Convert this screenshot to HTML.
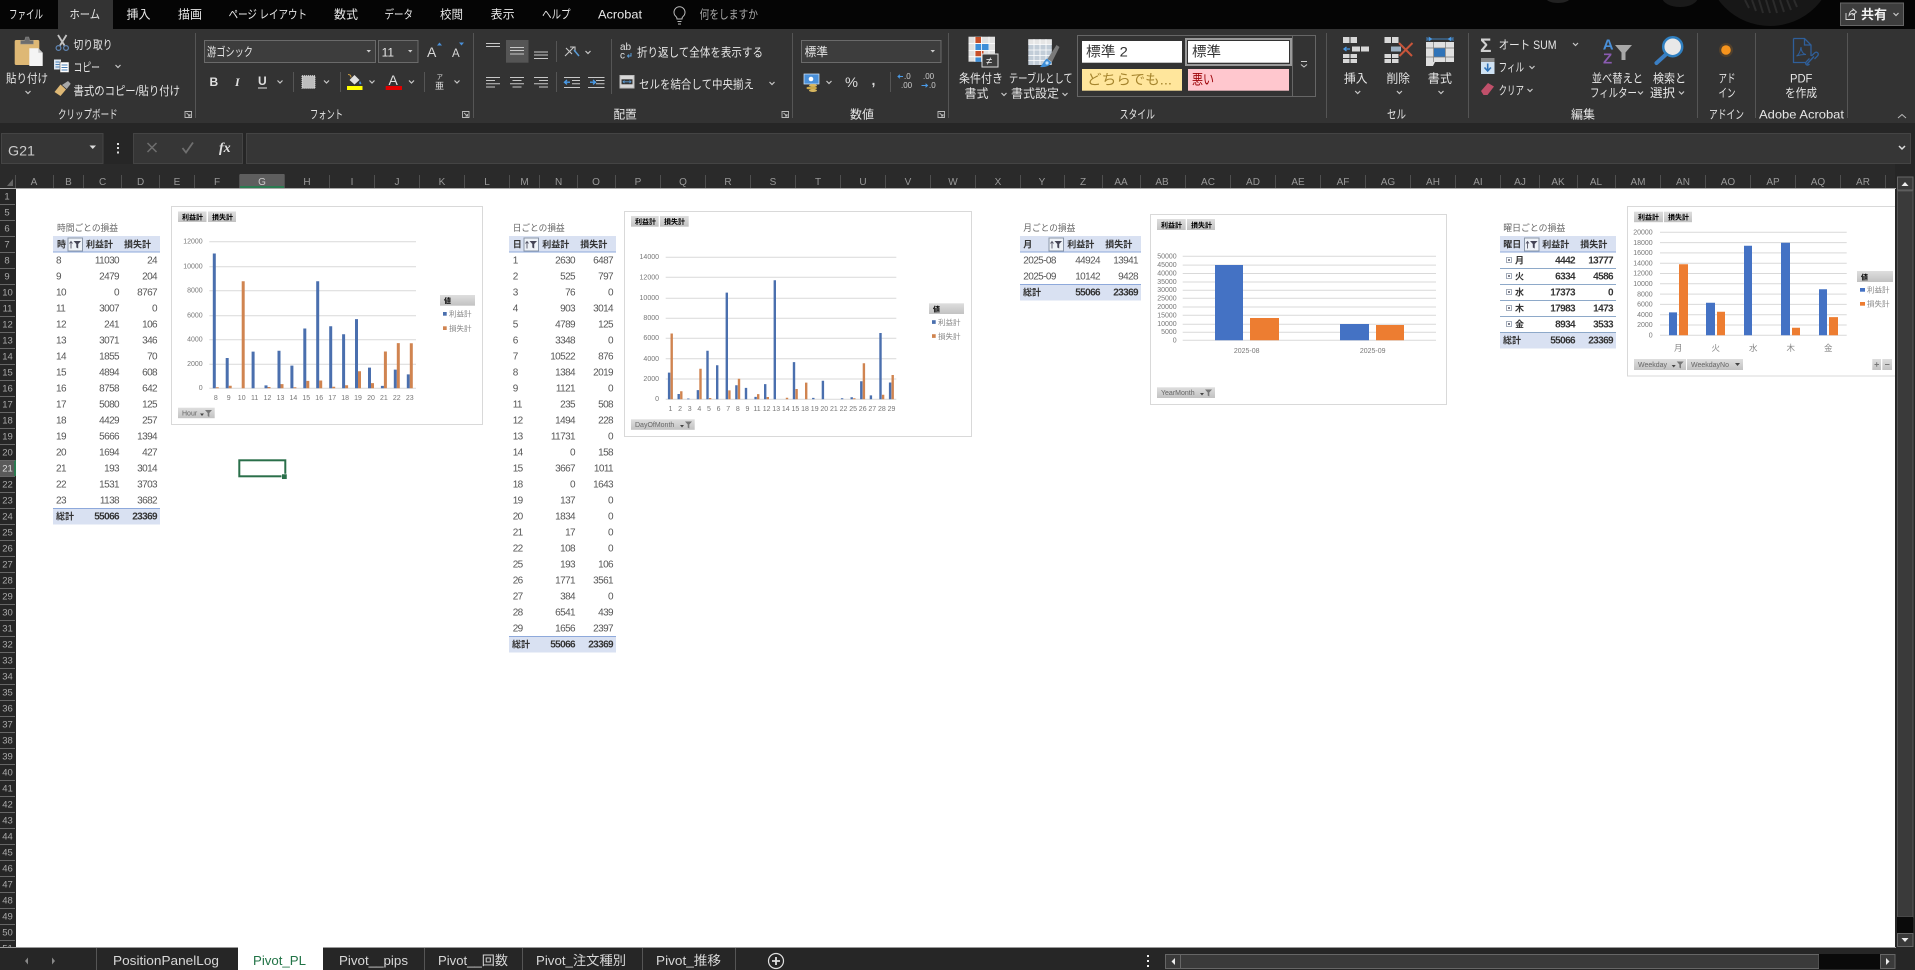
<!DOCTYPE html>
<html lang="ja"><head><meta charset="utf-8"><title>Excel</title>
<style>
html,body{margin:0;padding:0;background:#262626;overflow:hidden;width:1915px;height:970px}
svg{display:block;position:absolute;left:0;top:0}
text{font-family:"Liberation Sans","Noto Sans CJK JP",sans-serif;white-space:pre}
.r text,text.r{fill:#e6e6e6;font-size:12px}
.tb text{fill:#e8e8e8;font-size:12px}
.gl text{fill:#d8d8d8;font-size:12px}
.ch{fill:none;stroke:#cfcfcf;stroke-width:1.2}
.ic{fill:none;stroke:#c8c8c8;stroke-width:1}
.ch2 text{font-size:10px;fill:#999;text-anchor:middle}
.rh text{font-size:9.5px;fill:#aaa;text-anchor:middle}
.num text{font-size:10px;letter-spacing:-.6px;fill:#555}
.e{text-anchor:end}
.hd text{font-size:9px;fill:#333;font-weight:bold}
.ttl{font-size:9px;fill:#666}
.cl text{font-size:7px;fill:#777}
.cl .m{text-anchor:middle}
.b{font-size:7px;font-weight:bold;fill:#000}
.f{font-size:7px;fill:#666}
.lg{font-size:7.5px;fill:#888}
.tabs text{font-size:13px;fill:#d8d8d8}
.sf{font-family:"Liberation Serif","Noto Serif CJK SC",serif}
</style></head><body>
<svg width="1915" height="970" viewBox="0 0 1915 970" xmlns="http://www.w3.org/2000/svg">
<defs>
<linearGradient id="g" x1="0" y1="0" x2="0" y2="1"><stop offset="0" stop-color="#dedede"/><stop offset="1" stop-color="#c2c2c2"/></linearGradient>
<path id="c" d="M-2.5-1L0 1.5 2.5-1" fill="none" stroke="#c8c8c8" stroke-width="1.2"/>
<path id="l" d="M.5.5h6.5v6h-6.5zM2 2l3.5 3M5.5 3v2h-2" fill="none" stroke="#bbb" stroke-width=".9"/>
<g id="fb"><rect x=".5" y=".5" width="14.5" height="13" fill="#eef2f8" stroke="#8a96a8"/><path d="M3.5 11V4.5M2 6l1.5-2L5 6" fill="none" stroke="#556" stroke-width=".9"/><path d="M6 3.5h7.5l-2.8 3v4.5l-1.9-1V6.500z" fill="#445"/></g>
<g id="ff"><path d="M0 4h4l-2 2.500z" fill="#444"/><path d="M5 .5h7l-2.700 3v4l-1.600-1v-3z" fill="#777"/></g>
</defs>

<!-- sheet -->
<rect x="16" y="189" width="1880" height="758" fill="#fff"/>

<!-- Table 1 -->
<text class="ttl" x="57" y="231" textLength="61" lengthAdjust="spacingAndGlyphs">時間ごとの損益</text>
<rect x="53" y="236" width="107" height="16" fill="#d9e1f2"/><rect x="53" y="251.500" width="107" height="1" fill="#8ea9db"/>
<rect x="53" y="508" width="107" height="16.500" fill="#d9e1f2"/><rect x="53" y="508" width="107" height="1" fill="#8ea9db"/>
<use href="#fb" x="67.500" y="237.500"/>
<g class="hd"><text x="57" y="247.500">時</text><text x="86" y="247.500">利益計</text><text x="124" y="247.500">損失計</text><text x="56" y="519.500" font-size="9">総計</text></g>
<g class="num">
<text x="56" y="263.600">8</text><text x="56" y="279.600">9</text><text x="56" y="295.600">10</text><text x="56" y="311.600">11</text><text x="56" y="327.600">12</text><text x="56" y="343.600">13</text><text x="56" y="359.600">14</text><text x="56" y="375.600">15</text><text x="56" y="391.600">16</text><text x="56" y="407.600">17</text><text x="56" y="423.600">18</text><text x="56" y="439.600">19</text><text x="56" y="455.600">20</text><text x="56" y="471.600">21</text><text x="56" y="487.600">22</text><text x="56" y="503.600">23</text>
<g class="e">
<text class="e" x="119" y="263.600">11030</text><text class="e" x="157" y="263.600">24</text>
<text class="e" x="119" y="279.600">2479</text><text class="e" x="157" y="279.600">204</text>
<text class="e" x="119" y="295.600">0</text><text class="e" x="157" y="295.600">8767</text>
<text class="e" x="119" y="311.600">3007</text><text class="e" x="157" y="311.600">0</text>
<text class="e" x="119" y="327.600">241</text><text class="e" x="157" y="327.600">106</text>
<text class="e" x="119" y="343.600">3071</text><text class="e" x="157" y="343.600">346</text>
<text class="e" x="119" y="359.600">1855</text><text class="e" x="157" y="359.600">70</text>
<text class="e" x="119" y="375.600">4894</text><text class="e" x="157" y="375.600">608</text>
<text class="e" x="119" y="391.600">8758</text><text class="e" x="157" y="391.600">642</text>
<text class="e" x="119" y="407.600">5080</text><text class="e" x="157" y="407.600">125</text>
<text class="e" x="119" y="423.600">4429</text><text class="e" x="157" y="423.600">257</text>
<text class="e" x="119" y="439.600">5666</text><text class="e" x="157" y="439.600">1394</text>
<text class="e" x="119" y="455.600">1694</text><text class="e" x="157" y="455.600">427</text>
<text class="e" x="119" y="471.600">193</text><text class="e" x="157" y="471.600">3014</text>
<text class="e" x="119" y="487.600">1531</text><text class="e" x="157" y="487.600">3703</text>
<text class="e" x="119" y="503.600">1138</text><text class="e" x="157" y="503.600">3682</text>
<text class="e" x="119" y="519.600" font-weight="bold" style="fill:#333">55066</text><text class="e" x="157" y="519.600" font-weight="bold" style="fill:#333">23369</text>
</g></g>

<!-- Chart 1 -->
<rect x="171.500" y="206.500" width="311" height="218" fill="#fff" stroke="#d9d9d9"/>
<rect x="178" y="211.500" width="28.500" height="10.500" fill="url(#g)"/><rect x="208" y="211.500" width="28" height="10.500" fill="url(#g)"/>
<text class="b" x="182" y="219.500">利益計</text><text class="b" x="212" y="219.500">損失計</text>
<path d="M209.300 241.700H416M209.300 266.700H416M209.300 290.700H416M209.300 315.700H416M209.300 339.700H416M209.300 364.300H416M209.300 388.300H416" stroke="#d9d9d9" fill="none"/>
<g class="cl"><g class="e"><text class="e" x="202.700" y="243.500">12000</text><text class="e" x="202.700" y="268.500">10000</text><text class="e" x="202.700" y="292.500">8000</text><text class="e" x="202.700" y="317.500">6000</text><text class="e" x="202.700" y="341.500">4000</text><text class="e" x="202.700" y="366">2000</text><text class="e" x="202.700" y="390">0</text></g>
<text class="m" x="215.800" y="400">8</text><text class="m" x="228.700" y="400">9</text><text class="m" x="241.700" y="400">10</text><text class="m" x="254.600" y="400">11</text><text class="m" x="267.500" y="400">12</text><text class="m" x="280.500" y="400">13</text><text class="m" x="293.400" y="400">14</text><text class="m" x="306.300" y="400">15</text><text class="m" x="319.200" y="400">16</text><text class="m" x="332.200" y="400">17</text><text class="m" x="345.100" y="400">18</text><text class="m" x="358" y="400">19</text><text class="m" x="371" y="400">20</text><text class="m" x="383.900" y="400">21</text><text class="m" x="396.800" y="400">22</text><text class="m" x="409.800" y="400">23</text></g>
<path fill="#4a6fae" d="M212.800 253.500h3v134.800h-3zM225.700 358h3v30.300h-3zM251.600 351.600h3v36.700h-3zM264.500 385.400h3v2.900h-3zM277.500 350.800h3v37.500h-3zM290.400 365.600h3v22.700h-3zM303.300 328.500h3v59.800h-3zM316.200 281.300h3v107h-3zM329.200 326.200h3v62.100h-3zM342.100 334.200h3v54.100h-3zM355 319.100h3v69.200h-3zM368 367.600h3v20.700h-3zM380.900 385.900h3v2.400h-3zM393.800 369.600h3v18.700h-3zM406.800 374.400h3v13.900h-3z"/>
<path fill="#d08450" d="M215.800 387.300h3v1h-3zM228.700 385.800h3v2.500h-3zM241.700 281.200h3v107.100h-3zM267.500 387h3v1.300h-3zM280.500 384.100h3v4.200h-3zM293.400 387.300h3v1h-3zM306.300 380.900h3v7.400h-3zM319.200 380.500h3v7.800h-3zM332.200 386.800h3v1.500h-3zM345.100 385.200h3v3.100h-3zM358 371.300h3v17h-3zM371 383.100h3v5.200h-3zM383.900 351.500h3v36.800h-3zM396.800 343.100h3v45.200h-3zM409.800 343.300h3v45h-3z"/>
<rect x="178" y="407.700" width="36.700" height="10.500" fill="url(#g)"/><text class="f" x="182" y="415.500">Hour</text><use href="#ff" x="200" y="409.500"/>
<rect x="440" y="295" width="35" height="10.700" fill="url(#g)"/><text class="b" x="444" y="303" font-size="8">値</text>
<rect x="443" y="312" width="3.700" height="3.700" fill="#4a6fae"/><text class="lg" x="449" y="316.500">利益計</text>
<rect x="443" y="326.300" width="3.700" height="3.700" fill="#d08450"/><text class="lg" x="449" y="331">損失計</text>

<rect x="239.300" y="460.300" width="46" height="16" fill="none" stroke="#2a6f4a" stroke-width="2"/>
<rect x="281.700" y="474" width="5.300" height="5.300" fill="#2a6f4a" stroke="#fff" stroke-width=".5"/>

<!-- Table 2 -->
<text class="ttl" x="512.700" y="231" textLength="52" lengthAdjust="spacingAndGlyphs">日ごとの損益</text>
<rect x="509" y="236" width="107" height="16" fill="#d9e1f2"/><rect x="509" y="251.500" width="107" height="1" fill="#8ea9db"/>
<rect x="509" y="636" width="107" height="16.500" fill="#d9e1f2"/><rect x="509" y="636" width="107" height="1" fill="#8ea9db"/>
<use href="#fb" x="523.500" y="237.500"/>
<g class="hd"><text x="512.700" y="247.500">日</text><text x="542.300" y="247.500">利益計</text><text x="580.300" y="247.500">損失計</text><text x="512" y="647.500">総計</text></g>
<g class="num">
<text x="512.700" y="263.600">1</text><text class="e" x="575" y="263.600">2630</text><text class="e" x="613" y="263.600">6487</text>
<text x="512.700" y="279.600">2</text><text class="e" x="575" y="279.600">525</text><text class="e" x="613" y="279.600">797</text>
<text x="512.700" y="295.600">3</text><text class="e" x="575" y="295.600">76</text><text class="e" x="613" y="295.600">0</text>
<text x="512.700" y="311.600">4</text><text class="e" x="575" y="311.600">903</text><text class="e" x="613" y="311.600">3014</text>
<text x="512.700" y="327.600">5</text><text class="e" x="575" y="327.600">4789</text><text class="e" x="613" y="327.600">125</text>
<text x="512.700" y="343.600">6</text><text class="e" x="575" y="343.600">3348</text><text class="e" x="613" y="343.600">0</text>
<text x="512.700" y="359.600">7</text><text class="e" x="575" y="359.600">10522</text><text class="e" x="613" y="359.600">876</text>
<text x="512.700" y="375.600">8</text><text class="e" x="575" y="375.600">1384</text><text class="e" x="613" y="375.600">2019</text>
<text x="512.700" y="391.600">9</text><text class="e" x="575" y="391.600">1121</text><text class="e" x="613" y="391.600">0</text>
<text x="512.700" y="407.600">11</text><text class="e" x="575" y="407.600">235</text><text class="e" x="613" y="407.600">508</text>
<text x="512.700" y="423.600">12</text><text class="e" x="575" y="423.600">1494</text><text class="e" x="613" y="423.600">228</text>
<text x="512.700" y="439.600">13</text><text class="e" x="575" y="439.600">11731</text><text class="e" x="613" y="439.600">0</text>
<text x="512.700" y="455.600">14</text><text class="e" x="575" y="455.600">0</text><text class="e" x="613" y="455.600">158</text>
<text x="512.700" y="471.600">15</text><text class="e" x="575" y="471.600">3667</text><text class="e" x="613" y="471.600">1011</text>
<text x="512.700" y="487.600">18</text><text class="e" x="575" y="487.600">0</text><text class="e" x="613" y="487.600">1643</text>
<text x="512.700" y="503.600">19</text><text class="e" x="575" y="503.600">137</text><text class="e" x="613" y="503.600">0</text>
<text x="512.700" y="519.600">20</text><text class="e" x="575" y="519.600">1834</text><text class="e" x="613" y="519.600">0</text>
<text x="512.700" y="535.600">21</text><text class="e" x="575" y="535.600">17</text><text class="e" x="613" y="535.600">0</text>
<text x="512.700" y="551.600">22</text><text class="e" x="575" y="551.600">108</text><text class="e" x="613" y="551.600">0</text>
<text x="512.700" y="567.600">25</text><text class="e" x="575" y="567.600">193</text><text class="e" x="613" y="567.600">106</text>
<text x="512.700" y="583.600">26</text><text class="e" x="575" y="583.600">1771</text><text class="e" x="613" y="583.600">3561</text>
<text x="512.700" y="599.600">27</text><text class="e" x="575" y="599.600">384</text><text class="e" x="613" y="599.600">0</text>
<text x="512.700" y="615.600">28</text><text class="e" x="575" y="615.600">6541</text><text class="e" x="613" y="615.600">439</text>
<text x="512.700" y="631.600">29</text><text class="e" x="575" y="631.600">1656</text><text class="e" x="613" y="631.600">2397</text>
<text class="e" x="575" y="647.600" font-weight="bold" style="fill:#333">55066</text><text class="e" x="613" y="647.600" font-weight="bold" style="fill:#333">23369</text>
</g>

<!-- Chart 2 -->
<rect x="624.500" y="211.500" width="347" height="225" fill="#fff" stroke="#d9d9d9"/>
<rect x="631" y="216" width="27.700" height="10.700" fill="url(#g)"/><rect x="660" y="216" width="28.700" height="10.700" fill="url(#g)"/>
<text class="b" x="635" y="224">利益計</text><text class="b" x="664" y="224">損失計</text>
<path d="M665.700 257.300H896.300M665.700 277.300H896.300M665.700 298.300H896.300M665.700 318.300H896.300M665.700 338.300H896.300M665.700 358.700H896.300M665.700 379H896.300M665.700 399.300H896.300" stroke="#d9d9d9" fill="none"/>
<g class="cl"><text class="e" x="659" y="259">14000</text><text class="e" x="659" y="279.500">12000</text><text class="e" x="659" y="300">10000</text><text class="e" x="659" y="320">8000</text><text class="e" x="659" y="340">6000</text><text class="e" x="659" y="361">4000</text><text class="e" x="659" y="381">2000</text><text class="e" x="659" y="401">0</text>
<text class="m" x="670.500" y="411">1</text><text class="m" x="680.100" y="411">2</text><text class="m" x="689.700" y="411">3</text><text class="m" x="699.300" y="411">4</text><text class="m" x="708.900" y="411">5</text><text class="m" x="718.600" y="411">6</text><text class="m" x="728.200" y="411">7</text><text class="m" x="737.800" y="411">8</text><text class="m" x="747.400" y="411">9</text><text class="m" x="757" y="411">11</text><text class="m" x="766.600" y="411">12</text><text class="m" x="776.200" y="411">13</text><text class="m" x="785.800" y="411">14</text><text class="m" x="795.400" y="411">15</text><text class="m" x="805" y="411">18</text><text class="m" x="814.700" y="411">19</text><text class="m" x="824.300" y="411">20</text><text class="m" x="833.900" y="411">21</text><text class="m" x="843.500" y="411">22</text><text class="m" x="853.100" y="411">25</text><text class="m" x="862.700" y="411">26</text><text class="m" x="872.300" y="411">27</text><text class="m" x="881.900" y="411">28</text><text class="m" x="891.500" y="411">29</text></g>
<path fill="#4a6fae" d="M667.900 372.600h2.400v26.700h-2.400zM677.500 394h2.400v5.300h-2.400zM687.100 398.500h2.400v.8h-2.400zM696.700 390.100h2.400v9.200h-2.400zM706.300 350.700h2.400v48.600h-2.400zM716 365.300h2.400v34h-2.400zM725.600 292.600h2.400v106.700h-2.400zM735.200 385.300h2.400v14h-2.400zM744.800 387.900h2.400v11.400h-2.400zM754.400 396.900h2.400v2.400h-2.400zM764 384.100h2.400v15.200h-2.400zM773.600 280.300h2.400v119h-2.400zM792.800 362.100h2.400v37.200h-2.400zM812.100 397.900h2.400v1.400h-2.400zM821.700 380.700h2.400v18.600h-2.400zM840.900 398.200h2.400v1.100h-2.400zM850.500 397.300h2.400v2h-2.400zM860.100 381.300h2.400v18h-2.400zM869.700 395.400h2.400v3.900h-2.400zM879.300 333h2.400v66.300h-2.400zM888.900 382.500h2.400v16.800h-2.400z"/>
<path fill="#d08450" d="M670.500 333.500h2.400v65.800h-2.400zM680.100 391.200h2.400v8.100h-2.400zM699.300 368.700h2.400v30.600h-2.400zM708.900 398h2.400v1.300h-2.400zM728.200 390.400h2.400v8.900h-2.400zM737.800 378.800h2.400v20.500h-2.400zM757 394.100h2.400v5.200h-2.400zM766.600 397h2.400v2.300h-2.400zM785.800 397.700h2.400v1.600h-2.400zM795.400 389h2.400v10.300h-2.400zM805 382.600h2.400v16.700h-2.400zM853.100 398.200h2.400v1.100h-2.400zM862.700 363.200h2.400v36.100h-2.400zM881.900 394.800h2.400v4.500h-2.400zM891.500 375h2.400v24.300h-2.400z"/>
<rect x="631" y="419.300" width="63.700" height="10.500" fill="url(#g)"/><text class="f" x="635" y="427">DayOfMonth</text><use href="#ff" x="680" y="421"/>
<rect x="929" y="303.300" width="35" height="10.700" fill="url(#g)"/><text class="b" x="933" y="311.500" font-size="8">値</text>
<rect x="932" y="320.200" width="3.700" height="3.700" fill="#4a6fae"/><text class="lg" x="938" y="324.800">利益計</text>
<rect x="932" y="334.200" width="3.700" height="3.700" fill="#d08450"/><text class="lg" x="938" y="338.800">損失計</text>

<!-- Table 3 -->
<text class="ttl" x="1023.300" y="231" textLength="52" lengthAdjust="spacingAndGlyphs">月ごとの損益</text>
<rect x="1020" y="236" width="121" height="16" fill="#d9e1f2"/><rect x="1020" y="251.500" width="121" height="1" fill="#8ea9db"/>
<rect x="1020" y="284" width="121" height="16.500" fill="#d9e1f2"/><rect x="1020" y="284" width="121" height="1" fill="#8ea9db"/>
<use href="#fb" x="1048.500" y="237.500"/>
<g class="hd"><text x="1023.300" y="247.500">月</text><text x="1067.300" y="247.500">利益計</text><text x="1105.300" y="247.500">損失計</text><text x="1023" y="295.500">総計</text></g>
<g class="num"><text x="1023.300" y="263.600">2025-08</text><text class="e" x="1100" y="263.600">44924</text><text class="e" x="1138" y="263.600">13941</text>
<text x="1023.300" y="279.600">2025-09</text><text class="e" x="1100" y="279.600">10142</text><text class="e" x="1138" y="279.600">9428</text>
<text class="e" x="1100" y="295.600" font-weight="bold" style="fill:#333">55066</text><text class="e" x="1138" y="295.600" font-weight="bold" style="fill:#333">23369</text></g>

<!-- Chart 3 -->
<rect x="1150.500" y="214.500" width="296" height="190" fill="#fff" stroke="#d9d9d9"/>
<rect x="1157" y="219" width="28.700" height="11" fill="url(#g)"/><rect x="1187" y="219" width="28" height="11" fill="url(#g)"/>
<text class="b" x="1161" y="227.500">利益計</text><text class="b" x="1191" y="227.500">損失計</text>
<path d="M1182.700 256.300H1436M1182.700 265.100H1436M1182.700 273.500H1436M1182.700 282H1436M1182.700 290.300H1436M1182.700 298.300H1436M1182.700 307H1436M1182.700 315.300H1436M1182.700 324.300H1436M1182.700 332.300H1436M1182.700 340.300H1436" stroke="#d9d9d9" fill="none"/>
<g class="cl"><text class="e" x="1176.700" y="258.500">50000</text><text class="e" x="1176.700" y="267">45000</text><text class="e" x="1176.700" y="275.500">40000</text><text class="e" x="1176.700" y="284">35000</text><text class="e" x="1176.700" y="292">30000</text><text class="e" x="1176.700" y="300.500">25000</text><text class="e" x="1176.700" y="309">20000</text><text class="e" x="1176.700" y="317.500">15000</text><text class="e" x="1176.700" y="326">10000</text><text class="e" x="1176.700" y="334">5000</text><text class="e" x="1176.700" y="342.500">0</text><text class="m" x="1246.700" y="352.800">2025-08</text><text class="m" x="1372.700" y="352.800">2025-09</text></g>
<path fill="#4472c4" d="M1215 265h28v75.300h-28zM1340 324h29v16.300h-29z"/><path fill="#ed7d31" d="M1250 318h29v22.300h-29zM1376 325h28v15.300h-28z"/>
<rect x="1157" y="387.300" width="58" height="10.700" fill="url(#g)"/><text class="f" x="1161" y="395">YearMonth</text><use href="#ff" x="1200" y="389"/>

<!-- Table 4 -->
<text class="ttl" x="1503.300" y="231" textLength="62" lengthAdjust="spacingAndGlyphs">曜日ごとの損益</text>
<rect x="1500" y="236" width="116" height="16" fill="#d9e1f2"/><rect x="1500" y="251.500" width="116" height="1" fill="#8ea9db"/>
<rect x="1500" y="332" width="116" height="16.500" fill="#d9e1f2"/>
<path d="M1500 268.500H1616M1500 284.500H1616M1500 300.500H1616M1500 316.500H1616M1500 332.500H1616" stroke="#8ea9c9"/>
<use href="#fb" x="1524" y="237.500"/>
<g class="hd"><text x="1503.300" y="247.500">曜日</text><text x="1542.300" y="247.500">利益計</text><text x="1580.300" y="247.500">損失計</text><text x="1503" y="343.500">総計</text>
<text x="1515" y="263.500">月</text><text x="1515" y="279.500">火</text><text x="1515" y="295.500">水</text><text x="1515" y="311.500">木</text><text x="1515" y="327.500">金</text></g>
<path d="M1506.500 257.500h5v5h-5zM1506.500 273.500h5v5h-5zM1506.500 289.500h5v5h-5zM1506.500 305.500h5v5h-5zM1506.500 321.500h5v5h-5z" fill="#fff" stroke="#8a96a8" stroke-width=".8"/>
<path d="M1508 260h2M1509 259v2M1508 276h2M1509 275v2M1508 292h2M1509 291v2M1508 308h2M1509 307v2M1508 324h2M1509 323v2" stroke="#334" stroke-width=".8"/>
<g class="num"><g style="font-weight:bold">
<text class="e" x="1575" y="263.600" style="fill:#333">4442</text><text class="e" x="1613" y="263.600" style="fill:#333">13777</text>
<text class="e" x="1575" y="279.600" style="fill:#333">6334</text><text class="e" x="1613" y="279.600" style="fill:#333">4586</text>
<text class="e" x="1575" y="295.600" style="fill:#333">17373</text><text class="e" x="1613" y="295.600" style="fill:#333">0</text>
<text class="e" x="1575" y="311.600" style="fill:#333">17983</text><text class="e" x="1613" y="311.600" style="fill:#333">1473</text>
<text class="e" x="1575" y="327.600" style="fill:#333">8934</text><text class="e" x="1613" y="327.600" style="fill:#333">3533</text>
<text class="e" x="1575" y="343.600" style="fill:#333">55066</text><text class="e" x="1613" y="343.600" style="fill:#333">23369</text></g></g>

<!-- Chart 4 -->
<rect x="1627.500" y="206.500" width="300" height="169.500" fill="#fff" stroke="#d9d9d9"/>
<rect x="1634" y="211.700" width="29" height="10.500" fill="url(#g)"/><rect x="1664" y="211.700" width="28" height="10.500" fill="url(#g)"/>
<text class="b" x="1638" y="219.700">利益計</text><text class="b" x="1668" y="219.700">損失計</text>
<path d="M1660 232.300H1846.700M1660 242.600H1846.700M1660 252.900H1846.700M1660 263.200H1846.700M1660 273.500H1846.700M1660 283.800H1846.700M1660 294.100H1846.700M1660 304.400H1846.700M1660 314.700H1846.700M1660 325H1846.700M1660 335.300H1846.700" stroke="#d9d9d9" fill="none"/>
<g class="cl"><text class="e" x="1652.700" y="234.500">20000</text><text class="e" x="1652.700" y="244.800">18000</text><text class="e" x="1652.700" y="255.100">16000</text><text class="e" x="1652.700" y="265.400">14000</text><text class="e" x="1652.700" y="275.700">12000</text><text class="e" x="1652.700" y="286">10000</text><text class="e" x="1652.700" y="296.300">8000</text><text class="e" x="1652.700" y="306.600">6000</text><text class="e" x="1652.700" y="316.900">4000</text><text class="e" x="1652.700" y="327.200">2000</text><text class="e" x="1652.700" y="337.500">0</text>
<text class="m" x="1678.300" y="351" style="font-size:8.500px;fill:#888">月</text><text class="m" x="1715.700" y="351" style="font-size:8.500px;fill:#888">火</text><text class="m" x="1753.300" y="351" style="font-size:8.500px;fill:#888">水</text><text class="m" x="1790.700" y="351" style="font-size:8.500px;fill:#888">木</text><text class="m" x="1828.300" y="351" style="font-size:8.500px;fill:#888">金</text></g>
<path fill="#4472c4" d="M1669 312.400h8v22.900h-8zM1706 302.700h9v32.600h-9zM1744 245.800h8v89.500h-8zM1781 242.700h9v92.600h-9zM1819 289.300h8v46h-8z"/>
<path fill="#ed7d31" d="M1679 264.300h9v71h-9zM1717 311.700h8v23.600h-8zM1792 327.700h8v7.600h-8zM1829 317.100h9v18.200h-9z"/>
<rect x="1634" y="359" width="52" height="11" fill="url(#g)"/><text class="f" x="1638" y="367">Weekday</text><use href="#ff" x="1671.700" y="361"/>
<rect x="1687" y="359" width="56" height="11" fill="url(#g)"/><text class="f" x="1691" y="367">WeekdayNo</text><path d="M1735 363h5l-2.500 3z" fill="#444"/>
<rect x="1872.300" y="359" width="8.700" height="11" fill="url(#g)"/><rect x="1882.300" y="359" width="9.700" height="11" fill="url(#g)"/>
<path d="M1874.500 364.500h4.500M1876.700 362.200v4.500M1885 364.500h4.500" stroke="#777"/>
<rect x="1857" y="271" width="36" height="11" fill="url(#g)"/><text class="b" x="1861" y="279.500" font-size="8">値</text>
<rect x="1860" y="288" width="5" height="3.700" fill="#4472c4"/><text class="lg" x="1867" y="292.500">利益計</text>
<rect x="1860" y="302" width="5" height="3.700" fill="#ed7d31"/><text class="lg" x="1867" y="306.500">損失計</text>

<!-- Row headers -->
<rect x="0" y="188" width="16" height="760" fill="#262626"/>
<rect x="0" y="460" width="15.500" height="16" fill="#5a5a5a"/><rect x="14" y="460" width="2" height="16" fill="#2a7a50"/>
<path stroke="#666" d="M0 204.500H15M0 220.500H15M0 236.500H15M0 252.500H15M0 268.500H15M0 284.500H15M0 300.500H15M0 316.500H15M0 332.500H15M0 348.500H15M0 364.500H15M0 380.500H15M0 396.500H15M0 412.500H15M0 428.500H15M0 444.500H15M0 460.500H15M0 476.500H15M0 492.500H15M0 508.500H15M0 524.500H15M0 540.500H15M0 556.500H15M0 572.500H15M0 588.500H15M0 604.500H15M0 620.500H15M0 636.500H15M0 652.500H15M0 668.500H15M0 684.500H15M0 700.500H15M0 716.500H15M0 732.500H15M0 748.500H15M0 764.500H15M0 780.500H15M0 796.500H15M0 812.500H15M0 828.500H15M0 844.500H15M0 860.500H15M0 876.500H15M0 892.500H15M0 908.500H15M0 924.500H15M0 940.500H15"/>
<g class="rh"><text x="7" y="199.500">1</text><text x="7" y="215.500">5</text><text x="7" y="231.500">6</text><text x="7" y="247.500">7</text><text x="7" y="263.500">8</text><text x="7" y="279.500">9</text><text x="7.500" y="295.500">10</text><text x="7.500" y="311.500">11</text><text x="7.500" y="327.500">12</text><text x="7.500" y="343.500">13</text><text x="7.500" y="359.500">14</text><text x="7.500" y="375.500">15</text><text x="7.500" y="391.500">16</text><text x="7.500" y="407.500">17</text><text x="7.500" y="423.500">18</text><text x="7.500" y="439.500">19</text><text x="7.500" y="455.500">20</text><text x="7.500" y="471.500" style="fill:#ddd">21</text><text x="7.500" y="487.500">22</text><text x="7.500" y="503.500">23</text><text x="7.500" y="519.500">24</text><text x="7.500" y="535.500">25</text><text x="7.500" y="551.500">26</text><text x="7.500" y="567.500">27</text><text x="7.500" y="583.500">28</text><text x="7.500" y="599.500">29</text><text x="7.500" y="615.500">30</text><text x="7.500" y="631.500">31</text><text x="7.500" y="647.500">32</text><text x="7.500" y="663.500">33</text><text x="7.500" y="679.500">34</text><text x="7.500" y="695.500">35</text><text x="7.500" y="711.500">36</text><text x="7.500" y="727.500">37</text><text x="7.500" y="743.500">38</text><text x="7.500" y="759.500">39</text><text x="7.500" y="775.500">40</text><text x="7.500" y="791.500">41</text><text x="7.500" y="807.500">42</text><text x="7.500" y="823.500">43</text><text x="7.500" y="839.500">44</text><text x="7.500" y="855.500">45</text><text x="7.500" y="871.500">46</text><text x="7.500" y="887.500">47</text><text x="7.500" y="903.500">48</text><text x="7.500" y="919.500">49</text><text x="7.500" y="935.500">50</text><text x="7.500" y="951.500">51</text></g>

<!-- Right scrollbar -->
<rect x="1895" y="164" width="20" height="784" fill="#262626"/>
<rect x="1897.500" y="177" width="15.500" height="13" fill="#3a3a3a" stroke="#666"/><path d="M1901.500 186h7l-3.500-4z" fill="#eee"/>
<rect x="1897.500" y="191" width="15.500" height="726" fill="#3a3a3a" stroke="#555"/>
<rect x="1897" y="917" width="16" height="16" fill="#0a0a0a"/>
<rect x="1897.500" y="933.500" width="15.500" height="13" fill="#3a3a3a" stroke="#666"/><path d="M1901.500 938h7l-3.500 4z" fill="#eee"/>

<!-- Title bar -->
<rect x="0" y="0" width="1915" height="29" fill="#050505"/>
<ellipse cx="1558" cy="-2" rx="12" ry="5" fill="#222"/>
<ellipse cx="1680" cy="-3" rx="18" ry="10" fill="#1a1a1a"/>
<circle cx="1770" cy="-38" r="64" fill="#171717"/>
<path d="M1745 0l4 8M1752 0l4 11M1759 0l4 13M1766 0l4 13M1773 0l4 13M1780 0l4 12M1787 0l4 10M1794 0l3 7" stroke="#2b2b2b" stroke-width="2"/>
<rect x="58" y="0" width="55" height="29" fill="#333"/>
<g class="tb">
<text x="9" y="18.300" textLength="34" lengthAdjust="spacingAndGlyphs">ファイル</text>
<text x="69.500" y="18.300" textLength="30.500" lengthAdjust="spacingAndGlyphs">ホーム</text>
<text x="126.500" y="18.300" textLength="24" lengthAdjust="spacingAndGlyphs">挿入</text>
<text x="178" y="18.300" textLength="24" lengthAdjust="spacingAndGlyphs">描画</text>
<text x="228.600" y="18.300" textLength="78.400" lengthAdjust="spacingAndGlyphs">ページ レイアウト</text>
<text x="334" y="18.300" textLength="24" lengthAdjust="spacingAndGlyphs">数式</text>
<text x="384.500" y="18.300" textLength="28.500" lengthAdjust="spacingAndGlyphs">データ</text>
<text x="440" y="18.300" textLength="23" lengthAdjust="spacingAndGlyphs">校閲</text>
<text x="490.600" y="18.300" textLength="24" lengthAdjust="spacingAndGlyphs">表示</text>
<text x="542" y="18.300" textLength="28.600" lengthAdjust="spacingAndGlyphs">ヘルプ</text>
<text x="598" y="18.300" textLength="44" lengthAdjust="spacingAndGlyphs">Acrobat</text>
<text x="699.600" y="18.300" textLength="58.400" lengthAdjust="spacingAndGlyphs" style="fill:#aaa">何をしますか</text>
</g>
<path d="M676 16.500a5.500 5.500 0 1 1 7 0c-.8.7-1 1.500-1 2.500h-5c0-1-.2-1.800-1-2.500zM677.500 21.500h4M678 24h3" fill="none" stroke="#bbb" stroke-width="1"/>
<rect x="1840.500" y="3" width="63" height="22.500" fill="#3d3d3d" stroke="#666"/>
<path d="M1846 13v6.500h8.500V14M1849 15.500c.3-3 2-5 4-5v-1.500l3.500 3-3.500 3v-1.500c-1.500 0-3 .7-4 2z" fill="none" stroke="#ddd" stroke-width=".9"/>
<text x="1861" y="19" font-size="13" font-weight="bold" fill="#f0f0f0" textLength="26" lengthAdjust="spacingAndGlyphs">共有</text>
<use href="#c" x="1896" y="14"/>

<!-- Ribbon -->
<rect x="0" y="29" width="1915" height="94" fill="#333"/>
<rect x="0" y="123" width="1915" height="41" fill="#262626"/>
<path stroke="#555" d="M195.500 33V118M473.500 33V118M792.500 33V118M948.500 33V118M1326.500 33V118M1468.500 33V118M1697.500 33V118M1755.500 33V118M1847.500 33V118M611.500 39V94M293.500 72V92M340.500 72V92M424.500 72V92M556.500 41V62M556.500 72V92M890.500 72V92"/>

<!-- Clipboard group -->
<rect x="14.700" y="40" width="24.600" height="25" rx="1.500" fill="#deb875"/>
<path d="M20.700 40.500h4l1-3.500h3l1 3.500h3.600v3.500H20.700z" fill="#6d6d6d" stroke="#888" stroke-width=".6"/>
<path d="M29.300 48.300h9l4.400 4.400V66H29.300z" fill="#f4f4f4"/><path d="M38.300 48.300v4.400h4.400" fill="#c8c8c8"/>
<path d="M58 35l6.500 10.500M66.500 35L60 45.500" stroke="#c4c4c4" stroke-width="1.800" fill="none"/>
<circle cx="58.500" cy="48" r="2.400" fill="none" stroke="#5f86b5" stroke-width="1.200"/><circle cx="66" cy="48" r="2.400" fill="none" stroke="#5f86b5" stroke-width="1.200"/>
<rect x="54" y="59.500" width="7" height="10" fill="#dfe8f2"/><rect x="60" y="62" width="9" height="10.500" fill="#fff" stroke="#333" stroke-width=".5"/>
<path d="M55.500 62h4M55.500 64.500h4M55.500 67h4M61.500 65h6M61.500 67.500h6M61.500 70h6" stroke="#4a7fb5" stroke-width="1"/>
<path d="M54.500 92l6-7.500 5.500 5-5.500 6.500z" fill="#deb875"/><path d="M62 85l6-4 2.700 2.700-4 5.300z" fill="#a8a8a8"/>
<g class="r">
<text x="6" y="82.300" textLength="42" lengthAdjust="spacingAndGlyphs">貼り付け</text>
<text x="73.500" y="49" textLength="39" lengthAdjust="spacingAndGlyphs">切り取り</text>
<text x="73.500" y="71.300" textLength="26.500" lengthAdjust="spacingAndGlyphs">コピー</text>
<text x="73.500" y="95" textLength="106.500" lengthAdjust="spacingAndGlyphs">書式のコピー/貼り付け</text>
<text x="58" y="118.300" textLength="59.600" lengthAdjust="spacingAndGlyphs">クリップボード</text>
<text x="310" y="118.300" textLength="33" lengthAdjust="spacingAndGlyphs">フォント</text>
<text x="613.500" y="118.300" textLength="23.200" lengthAdjust="spacingAndGlyphs">配置</text>
<text x="637" y="56.500" textLength="126" lengthAdjust="spacingAndGlyphs">折り返して全体を表示する</text>
<text x="639" y="88.300" textLength="115" lengthAdjust="spacingAndGlyphs">セルを結合して中央揃え</text>
<text x="850" y="118.300" textLength="24" lengthAdjust="spacingAndGlyphs">数値</text>
<text x="959" y="82.300" textLength="44" lengthAdjust="spacingAndGlyphs">条件付き</text>
<text x="964.500" y="97.500" textLength="24" lengthAdjust="spacingAndGlyphs">書式</text>
<text x="1009" y="82.300" textLength="63.600" lengthAdjust="spacingAndGlyphs">テーブルとして</text>
<text x="1011" y="97.500" textLength="48" lengthAdjust="spacingAndGlyphs">書式設定</text>
<text x="1119.600" y="118.300" textLength="35.400" lengthAdjust="spacingAndGlyphs">スタイル</text>
<text x="1344" y="82.300" textLength="23.500" lengthAdjust="spacingAndGlyphs">挿入</text>
<text x="1386.500" y="82.300" textLength="23.500" lengthAdjust="spacingAndGlyphs">削除</text>
<text x="1427.800" y="82.300" textLength="24.200" lengthAdjust="spacingAndGlyphs">書式</text>
<text x="1387" y="118.300" textLength="19" lengthAdjust="spacingAndGlyphs">セル</text>
<text x="1498.600" y="49" textLength="58" lengthAdjust="spacingAndGlyphs">オート SUM</text>
<text x="1498.600" y="71.500" textLength="25.400" lengthAdjust="spacingAndGlyphs">フィル</text>
<text x="1498.600" y="94.300" textLength="25.400" lengthAdjust="spacingAndGlyphs">クリア</text>
<text x="1591.700" y="82.300" textLength="51.300" lengthAdjust="spacingAndGlyphs">並べ替えと</text>
<text x="1590" y="97" textLength="47" lengthAdjust="spacingAndGlyphs">フィルター</text>
<text x="1653" y="82.300" textLength="33" lengthAdjust="spacingAndGlyphs">検索と</text>
<text x="1650" y="97" textLength="25" lengthAdjust="spacingAndGlyphs">選択</text>
<text x="1571" y="118.300" textLength="24" lengthAdjust="spacingAndGlyphs">編集</text>
<text x="1718.500" y="82.300" textLength="17" lengthAdjust="spacingAndGlyphs">アド</text>
<text x="1718.500" y="97" textLength="17" lengthAdjust="spacingAndGlyphs">イン</text>
<text x="1709" y="118.300" textLength="35" lengthAdjust="spacingAndGlyphs">アドイン</text>
<text x="1790" y="82.300" textLength="22.400" lengthAdjust="spacingAndGlyphs">PDF</text>
<text x="1785" y="97" textLength="32" lengthAdjust="spacingAndGlyphs">を作成</text>
<text x="1759" y="118.300" textLength="85" lengthAdjust="spacingAndGlyphs">Adobe Acrobat</text>
</g>
<use href="#c" x="28" y="92"/><use href="#c" x="118" y="66"/><use href="#l" x="184.500" y="111"/>
<use href="#l" x="462" y="111"/><use href="#l" x="781.500" y="111"/><use href="#l" x="937.500" y="111"/>

<rect x="204.500" y="40.500" width="171" height="22" fill="#3d3d3d" stroke="#6a6a6a"/>
<rect x="378.500" y="40.500" width="39.500" height="22" fill="#3d3d3d" stroke="#6a6a6a"/>
<g class="r">
<text x="207" y="56" textLength="46" lengthAdjust="spacingAndGlyphs">游ゴシック</text>
<text x="381.600" y="56.300" textLength="12.400" lengthAdjust="spacingAndGlyphs">11</text>
</g>
<path d="M366.500 50h4.500l-2.250 2.500zM408 50h4.500l-2.250 2.500z" fill="#ccc"/>
<text x="427" y="57" font-size="14" fill="#d8d8d8">A</text><path d="M437 45.500l2.500-3 2.500 3z" fill="#4a90d9"/>
<text x="452" y="57" font-size="11.500" fill="#d8d8d8">A</text><path d="M459 42.500h5l-2.500 3z" fill="#4a90d9"/>
<text x="209.500" y="86" font-size="12" font-weight="bold" fill="#e0e0e0">B</text>
<text class="sf" x="235" y="86" font-size="12" font-style="italic" font-weight="bold" fill="#e0e0e0">I</text>
<text x="258" y="85" font-size="12" font-weight="bold" fill="#e0e0e0">U</text><path d="M258 88h9" stroke="#e0e0e0"/>
<use href="#c" x="280" y="81.500"/>
<rect x="302" y="75.700" width="13" height="12.600" fill="#bdbdbd" stroke="#e8e8e8" stroke-dasharray="1 1"/><use href="#c" x="326.500" y="81.500"/>
<path d="M349.500 80l5-5 5 5-5 4.500z" fill="#e0e0e0"/><path d="M348 74.500c2 0 3 1 3 3" fill="none" stroke="#d0a040"/><path d="M360 81l1.500 2.500-1.500 1-1-1.500z" fill="#4a90d9"/>
<rect x="347" y="86" width="15.500" height="4" fill="#ffff00"/><use href="#c" x="372" y="81.500"/>
<text x="388.500" y="85" font-size="14" fill="#e0e0e0">A</text><rect x="385.700" y="86" width="16.300" height="4" fill="#e00000"/><use href="#c" x="411.500" y="81.500"/>
<text x="436.500" y="79" font-size="6.500" fill="#e0e0e0">ア</text><text x="435" y="89" font-size="9" fill="#e0e0e0">亜</text><use href="#c" x="457" y="81.500"/>

<!-- alignment -->
<rect x="506" y="40" width="22.500" height="22.700" fill="#555"/>
<path class="ic" d="M486 43.500h14M486 46.500h14M510 47.500h14M510 50.500h14M510 54h14M534 52h14M534 55h14M534 58.500h14"/>
<path class="ic" d="M486 77.500h14M486 80.500h9M486 83.800h14M486 87h9M510 77.500h14M512.500 80.500h9M510 83.800h14M512.500 87h9M534 77.500h14M539 80.500h9M534 83.800h14M539 87h9"/>
<path d="M565 56l9-9M570 47h5v5M566 48l6 6" fill="none" stroke="#c8c8c8" stroke-width="1.100"/><path d="M574 50l5 6" stroke="#5a9bd5" stroke-width="1.500"/><use href="#c" x="588" y="52"/>
<path class="ic" d="M564 77.500h16M572 80.500h8M572 83.800h8M564 87.500h16M588 77.500h16.500M596 80.500h8.500M596 83.800h8.500M588 87.500h16.500"/>
<path d="M570 82.200h-5M567 80l-2.500 2.200 2.500 2.200M590 82.200h5M593 80l2.500 2.200-2.500 2.200" fill="none" stroke="#4a9be8" stroke-width="1.400"/>
<text x="620" y="50" font-size="10" fill="#e0e0e0">ab</text><text x="620" y="58.500" font-size="10" fill="#e0e0e0">c</text><path d="M631 53v3h-3.500M629 54.500l-1.500 1.500 1.500 1.500" fill="none" stroke="#5a9bd5"/>
<rect x="620" y="75.500" width="14" height="12.500" fill="#d8d8d8" stroke="#bbb"/><rect x="621.500" y="79.300" width="11" height="5" fill="#333"/><path d="M623 81.800h8M624.500 80.500l-1.500 1.300 1.500 1.300M629.500 80.500l1.500 1.300-1.500 1.300" fill="none" stroke="#5a9bd5" stroke-width=".8"/>
<use href="#c" x="772" y="83"/>

<!-- Number -->
<rect x="801.500" y="40.500" width="139.500" height="22" fill="#3d3d3d" stroke="#6a6a6a"/><path d="M930.500 50h4.500l-2.250 2.500z" fill="#ccc"/>
<text x="804.500" y="56" font-size="12" fill="#e6e6e6" textLength="23.500" lengthAdjust="spacingAndGlyphs">標準</text>
<rect x="804" y="74" width="15" height="10" fill="#4a90d9" stroke="#dcecfb" stroke-width=".7"/><circle cx="811" cy="79" r="2.300" fill="#fff"/>
<ellipse cx="813" cy="85.500" rx="4" ry="1.500" fill="#d8b75f"/><ellipse cx="813" cy="88" rx="4" ry="1.500" fill="#c9a648"/><ellipse cx="813" cy="90.500" rx="4" ry="1.500" fill="#d8b75f"/><ellipse cx="809" cy="88" rx="2.500" ry="1.300" fill="#c9a648"/>
<use href="#c" x="829" y="82"/>
<text x="845" y="87" font-size="14" fill="#dcdcdc" textLength="13" lengthAdjust="spacingAndGlyphs">%</text>
<text x="871.500" y="85" font-size="14" font-weight="bold" fill="#dcdcdc">,</text>
<text x="904" y="79" font-size="8" fill="#ccc">.0</text><text x="901" y="88" font-size="8" fill="#ccc">.00</text><path d="M903 76.500h-5M900 74.700l-2 1.800 2 1.800" fill="none" stroke="#4a9be8" stroke-width="1"/>
<text x="923" y="79" font-size="8" fill="#ccc">.00</text><text x="929" y="88" font-size="8" fill="#ccc">.0</text><path d="M921.500 85.500h6M925.500 83.700l2 1.800-2 1.800" fill="none" stroke="#4a9be8" stroke-width="1"/>

<!-- Cond format -->
<rect x="968.500" y="36.700" width="26.500" height="25" fill="#e0e0e0"/>
<rect x="975" y="37" width="6" height="6" fill="#c8502a"/><rect x="975" y="44" width="14.500" height="6" fill="#3d8ed8"/><rect x="975" y="51" width="8.500" height="5.500" fill="#c8502a"/><rect x="975" y="57.500" width="6.500" height="4.300" fill="#3d8ed8"/>
<path d="M975 36.700v25M981.500 36.700v25M989 36.700v25M968.500 43.500h26.500M968.500 50.500h26.500M968.500 56.700h26.500" stroke="#fff" stroke-width=".8" fill="none"/>
<rect x="982" y="54" width="16" height="13" fill="#3d3d3d" stroke="#ddd"/>
<text x="986" y="64.500" font-size="11" fill="#f0f0f0">≠</text>
<use href="#c" x="1004" y="94"/>
<!-- Table format -->
<rect x="1028.300" y="39.300" width="23.500" height="25.700" fill="#c2cdd8"/><rect x="1028.300" y="39.300" width="23.500" height="5" fill="#e6e6e6"/>
<path d="M1034 39.300v25.700M1040 39.300v25.700M1046 39.300v25.700M1028.300 44.500h23.500M1028.300 50h23.500M1028.300 55.500h23.500M1028.300 60.500h23.500" stroke="#fff" stroke-width=".8"/>
<path d="M1056.500 45l-9 14 4.500 3 7.500-15z" fill="#7a7a7a"/><path d="M1047 58.500c-3 2-3.500 5-7 8.500 5 .5 9-.5 11.500-4.500z" fill="#3d8ed8"/><circle cx="1047" cy="63" r="1.600" fill="#bfe0fb"/>
<use href="#c" x="1065" y="94"/>
<!-- Style gallery -->
<rect x="1077.500" y="35.500" width="238" height="61" fill="none" stroke="#666"/><path d="M1292.500 35.500v61" stroke="#666"/>
<rect x="1082" y="41" width="100" height="21.700" fill="#fff"/>
<rect x="1186" y="39" width="105" height="26" fill="none" stroke="#9a9a9a" stroke-width="2"/>
<rect x="1188" y="41" width="101" height="21.700" fill="#fff"/>
<rect x="1082" y="69" width="100" height="21.700" fill="#ffe69c"/><rect x="1188" y="69" width="101" height="21.700" fill="#ffc7ce"/>
<text x="1086" y="56.500" font-size="14" fill="#333" textLength="41.800" lengthAdjust="spacingAndGlyphs">標準 2</text>
<text x="1192" y="56.500" font-size="14" fill="#333" textLength="29" lengthAdjust="spacingAndGlyphs">標準</text>
<text x="1087" y="84.500" font-size="14" fill="#a6852e" textLength="85" lengthAdjust="spacingAndGlyphs">どちらでも...</text>
<text x="1192" y="84.500" font-size="14" fill="#9c0006" textLength="22" lengthAdjust="spacingAndGlyphs">悪い</text>
<path d="M1301 61.500h6M1301 64.500l3 2.500 3-2.500" fill="none" stroke="#ccc" stroke-width="1"/>

<!-- Cells -->
<path d="M1343 37h6.500v6h-6.500zM1350.500 37h6.500v6h-6.500zM1343 54h6.500v4h-6.500zM1350.500 54h6.500v4h-6.500zM1343 59h6.500v4h-6.500zM1350.500 59h6.500v4h-6.500zM1352 46.500h8v5h-8zM1361 46.500h8v5h-8z" fill="#d8d8d8"/>
<path d="M1350 49h-6M1346.500 47l-2.500 2 2.500 2" fill="none" stroke="#4a9be8" stroke-width="1.300"/>
<use href="#c" x="1357.700" y="92"/>
<path d="M1384.500 37h6.500v6h-6.500zM1392 37h6.500v6h-6.500zM1384.500 54h6.500v4h-6.500zM1392 54h6.500v4h-6.500zM1384.500 59h6.500v4h-6.500zM1392 59h6.500v4h-6.500z" fill="#d8d8d8"/><path d="M1391 46.500h10v5h-10z" fill="#9cb0c2"/>
<path d="M1399 43l13 13M1412.500 43l-13 13" stroke="#c8553a" stroke-width="2"/>
<use href="#c" x="1399.400" y="92"/>
<path d="M1427 39h26M1427 37v4M1453 37v4M1432 39l-3-1.800v3.600zM1448 39l3-1.800v3.600z" fill="#4a9be8" stroke="#4a9be8" stroke-width=".7"/>
<path d="M1426 42h28v20h-19l-2 4h-7z" fill="#e0e0e0"/><rect x="1434" y="48" width="11" height="9" fill="#2f73b8"/>
<path d="M1433.500 42v20M1445.500 42v20M1426 48h28M1426 57h28" stroke="#777" stroke-width=".7" fill="none"/>
<use href="#c" x="1441" y="92"/>

<!-- Editing -->
<text x="1480" y="52" font-size="19" fill="#d0d0d0" font-weight="bold">Σ</text><use href="#c" x="1575.500" y="44"/>
<rect x="1481" y="58" width="13.500" height="4" fill="#8a8a8a"/><rect x="1481" y="62" width="13.500" height="12" fill="#cfe2f3"/><path d="M1487.700 63.500v7M1484.500 67.500l3.200 3.500 3.200-3.500" fill="none" stroke="#2f73b8" stroke-width="1.600"/>
<use href="#c" x="1532" y="67"/>
<path d="M1481 91l7-8 6 3.500-6.500 8.500h-4z" fill="#c0506a"/><use href="#c" x="1530" y="90"/>
<text x="1602.700" y="49.500" font-size="15" font-weight="bold" fill="#4a90d9">A</text><text x="1603" y="63.500" font-size="15" font-weight="bold" fill="#8a5bb0">Z</text>
<path d="M1615 45h17l-6.500 7.500V60h-4v-7.500z" fill="#a8a8a8"/>
<use href="#c" x="1640.500" y="92.500"/><use href="#c" x="1681.500" y="92.500"/>
<path d="M1667.500 53L1656.500 63" stroke="#3b7fc4" stroke-width="4" stroke-linecap="round"/><circle cx="1672.700" cy="46.700" r="9.500" fill="#e8e8e8" stroke="#2f7fc0" stroke-width="2.500"/>

<circle cx="1726" cy="50" r="7" fill="#8a5a20" opacity=".35"/><circle cx="1726" cy="50" r="4.800" fill="#f7941d"/>
<path d="M1793.500 38.500h11l6.500 6.500v11M1793.500 38.500v24h12M1804.500 38.500v6.500h6.500" fill="none" stroke="#2f5f9a" stroke-width="1.300"/>
<path d="M1796.500 56c2.500-1.500 4-5 4.500-9 0 4 2 7 5 7.500-3 0-6 .2-9.500 1.500z" fill="none" stroke="#2f5f9a" stroke-width="1"/>
<path d="M1807 64l7-7.500M1809.500 64c-2.500 2.500-5 0-3-2.500l3-3M1811.500 56l3-3c2.500-2 5 .5 3 3l-3 3" fill="none" stroke="#2f5f9a" stroke-width="1.300"/>
<path d="M1898 118l4-3.500 4 3.500" fill="none" stroke="#bbb" stroke-width="1"/>

<!-- formula bar -->
<rect x="1.500" y="133.500" width="101.500" height="30" fill="#363636" stroke="#444"/>
<text x="8" y="155.500" font-size="14" fill="#ccc" textLength="27" lengthAdjust="spacingAndGlyphs">G21</text>
<path d="M89.500 145.500h6.500l-3.250 3.500z" fill="#ddd"/>
<rect x="117" y="143" width="2" height="2" fill="#ddd"/><rect x="117" y="147" width="2" height="2" fill="#ddd"/><rect x="117" y="151.500" width="2" height="2" fill="#ddd"/>
<rect x="133.500" y="133.500" width="109" height="30" fill="#363636" stroke="#444"/>
<path d="M147.500 143l9 9M156.500 143l-9 9" stroke="#6f6f6f" stroke-width="1.500"/><path d="M182.500 148l3.500 4.500 7-10" fill="none" stroke="#6f6f6f" stroke-width="1.800"/>
<text class="sf" x="219" y="152" font-size="14" font-style="italic" font-weight="bold" fill="#e0e0e0">fx</text>
<rect x="246.500" y="133.500" width="1664" height="30" fill="#363636" stroke="#444"/>
<path d="M1899 146l3 3 3-3" fill="none" stroke="#ddd" stroke-width="1.500"/>

<!-- Column headers -->
<rect x="0" y="164" width="1895" height="24" fill="#2a2a2a"/>
<rect x="239.600" y="174" width="44.900" height="14" fill="#5e5e5e"/><rect x="239.600" y="186" width="44.900" height="2" fill="#2a7a50"/>
<rect x="0" y="188" width="1896" height="1" fill="#a8a8a8"/>
<path d="M7 186l6-7v7z" fill="#666"/>
<path stroke="#4f4f4f" d="M15.500 175V188M53.500 175V188M83.500 175V188M121.500 175V188M159.500 175V188M194.500 175V188M239.500 175V188M284.500 175V188M329.500 175V188M374.500 175V188M419.500 175V188M464.500 175V188M509.500 175V188M539.500 175V188M577.500 175V188M615.500 175V188M660.500 175V188M705.500 175V188M750.500 175V188M795.500 175V188M840.500 175V188M885.500 175V188M930.500 175V188M975.500 175V188M1020.500 175V188M1064.500 175V188M1102.500 175V188M1140.500 175V188M1185.500 175V188M1230.500 175V188M1275.500 175V188M1320.500 175V188M1365.500 175V188M1410.500 175V188M1455.500 175V188M1500.500 175V188M1539.500 175V188M1577.500 175V188M1615.500 175V188M1660.500 175V188M1705.500 175V188M1750.500 175V188M1795.500 175V188M1840.500 175V188M1885.500 175V188"/>
<g class="ch2"><text x="34" y="185">A</text><text x="68.400" y="185">B</text><text x="102.600" y="185">C</text><text x="140.600" y="185">D</text><text x="177" y="185">E</text><text x="217" y="185">F</text><text x="262" y="185" style="fill:#ccc">G</text><text x="307" y="185">H</text><text x="352" y="185">I</text><text x="397" y="185">J</text><text x="442" y="185">K</text><text x="487" y="185">L</text><text x="524.500" y="185">M</text><text x="558.600" y="185">N</text><text x="596" y="185">O</text><text x="638" y="185">P</text><text x="683" y="185">Q</text><text x="728" y="185">R</text><text x="773" y="185">S</text><text x="818" y="185">T</text><text x="863" y="185">U</text><text x="908" y="185">V</text><text x="953" y="185">W</text><text x="998" y="185">X</text><text x="1042" y="185">Y</text><text x="1083" y="185">Z</text><text x="1121" y="185">AA</text><text x="1162" y="185">AB</text><text x="1208" y="185">AC</text><text x="1253" y="185">AD</text><text x="1298" y="185">AE</text><text x="1343" y="185">AF</text><text x="1388" y="185">AG</text><text x="1433" y="185">AH</text><text x="1478" y="185">AI</text><text x="1520" y="185">AJ</text><text x="1558" y="185">AK</text><text x="1596" y="185">AL</text><text x="1638" y="185">AM</text><text x="1683" y="185">AN</text><text x="1728" y="185">AO</text><text x="1773" y="185">AP</text><text x="1818" y="185">AQ</text><text x="1863" y="185">AR</text></g>
<!-- re-apply top scrollbar button above header -->
<rect x="1897.500" y="177" width="15.500" height="13" fill="#3a3a3a" stroke="#666"/><path d="M1901.500 186h7l-3.500-4z" fill="#eee"/>

<!-- Sheet tabs -->
<rect x="0" y="947" width="1915" height="23" fill="#262626"/>
<rect x="0" y="947" width="1896" height="1" fill="#9a9a9a"/>
<rect x="238" y="947" width="85" height="23" fill="#fff"/>
<path stroke="#555" d="M96.500 948V970M424.500 948V970M522.500 948V970M642.500 948V970M735.500 948V970"/>
<path d="M28 957.500v7l-3-3.500zM52 957.500v7l3-3.500z" fill="#888"/>
<g class="tabs">
<text x="113" y="965" textLength="106" lengthAdjust="spacingAndGlyphs">PositionPanelLog</text>
<text x="253" y="965" textLength="53" lengthAdjust="spacingAndGlyphs" style="fill:#217346">Pivot_PL</text>
<text x="339" y="965" textLength="69" lengthAdjust="spacingAndGlyphs">Pivot__pips</text>
<text x="438" y="965" textLength="70" lengthAdjust="spacingAndGlyphs">Pivot__回数</text>
<text x="536" y="965" textLength="90" lengthAdjust="spacingAndGlyphs">Pivot_注文種別</text>
<text x="656" y="965" textLength="65" lengthAdjust="spacingAndGlyphs">Pivot_推移</text>
</g>
<circle cx="776" cy="961" r="7.500" fill="none" stroke="#e0e0e0" stroke-width="1.200"/><path d="M772 961h8M776 957v8" stroke="#e0e0e0" stroke-width="1.800"/>
<rect x="1147" y="955" width="2" height="2" fill="#eee"/><rect x="1147" y="960" width="2" height="2" fill="#eee"/><rect x="1147" y="965" width="2" height="2" fill="#eee"/>
<rect x="1165.500" y="954.500" width="15" height="14" fill="#3a3a3a" stroke="#666"/><path d="M1175 958v7l-3.500-3.500z" fill="#eee"/>
<rect x="1180.500" y="954.500" width="638.500" height="14" fill="#3a3a3a" stroke="#666"/>
<rect x="1819" y="954" width="62" height="15" fill="#0a0a0a"/>
<rect x="1880.500" y="954.500" width="14.500" height="14" fill="#3a3a3a" stroke="#666"/><path d="M1886 958v7l3.500-3.500z" fill="#eee"/>
</svg>
</body></html>
